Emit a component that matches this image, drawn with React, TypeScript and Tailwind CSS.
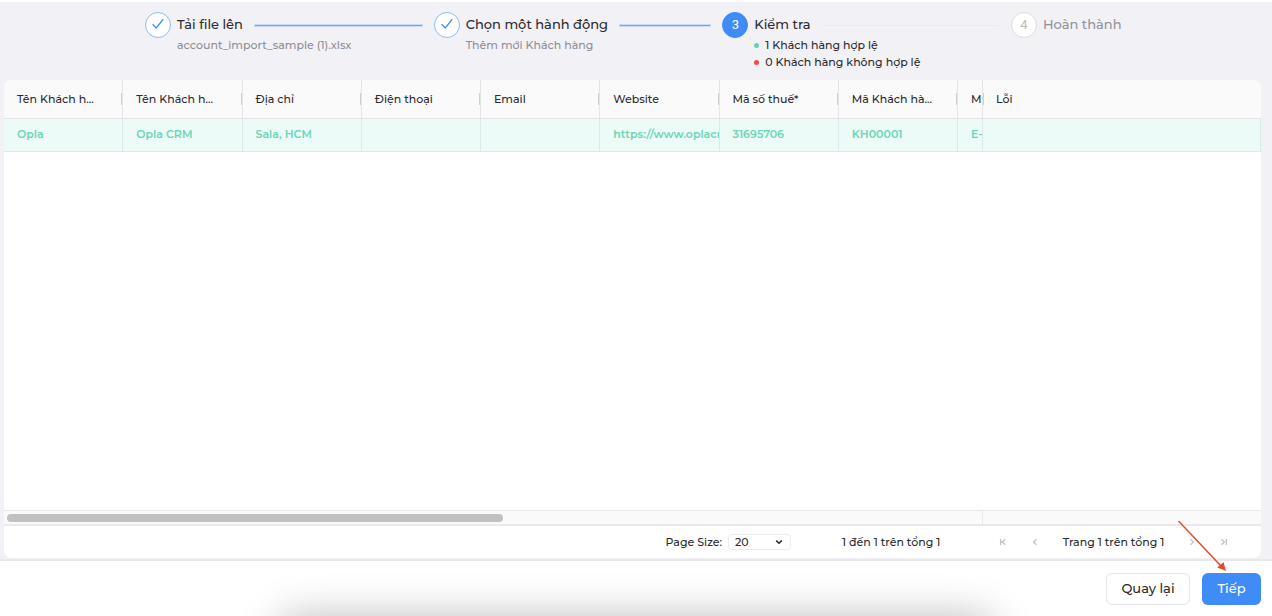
import type { ReactNode } from "react";

type StepState = "done" | "active" | "pending";

type Step = {
  title: string;
  state: StepState;
  detail?: ReactNode;
};

const steps: Step[] = [
  { title: "Tải file lên", state: "done", detail: "account_import_sample (1).xlsx" },
  { title: "Chọn một hành động", state: "done", detail: "Thêm mới Khách hàng" },
  {
    title: "Kiểm tra",
    state: "active",
    detail: (
      <ul className="text-[#2b2b30]">
        <li className="flex items-center gap-1.5">
          <span className="size-[5px] shrink-0 rounded-full bg-[#63d2ae]" />1 Khách hàng hợp lệ
        </li>
        <li className="flex items-center gap-1.5">
          <span className="size-[5px] shrink-0 rounded-full bg-[#f04a4a]" />0 Khách hàng không hợp lệ
        </li>
      </ul>
    ),
  },
  { title: "Hoàn thành", state: "pending" },
];

const columns = [
  { label: "Tên Khách h...", value: "Opla" },
  { label: "Tên Khách h...", value: "Opla CRM" },
  { label: "Địa chỉ", value: "Sala, HCM" },
  { label: "Điện thoại", value: "" },
  { label: "Email", value: "" },
  { label: "Website", value: "https://www.oplacr" },
  { label: "Mã số thuế*", value: "31695706" },
  { label: "Mã Khách hà...", value: "KH00001" },
  { label: "M", value: "E-" },
];

const circleStyles: Record<StepState, string> = {
  done: "border-[#8dbcfa] bg-white text-[#3f8cf8]",
  active: "border-[#3f8cf8] bg-[#3f8cf8] text-white",
  pending: "border-[#dcdce0] bg-white text-[#b9b9be]",
};

function StepItem({ step, index }: { step: Step; index: number }) {
  const last = index === steps.length - 1;
  return (
    <li className="flex min-w-0 gap-1.5">
      <span
        className={`flex size-[26px] shrink-0 items-center justify-center rounded-full border pb-0.5 font-['Roboto',sans-serif] text-[13px] leading-none ${circleStyles[step.state]}`}
      >
        {step.state === "done" ? (
          <svg viewBox="0 0 14 14" className="size-3.5" fill="none" stroke="currentColor" strokeWidth="1.3">
            <path d="M1.6 7.2 5.3 11 12.3 2.2" />
          </svg>
        ) : (
          index + 1
        )}
      </span>
      <div className="min-w-0 flex-1">
        <div className="flex h-[26px] items-center gap-3 pr-3">
          <span
            className={`text-[13px] font-medium whitespace-nowrap ${step.state === "pending" ? "text-[#939399]" : "text-[#2b2b30]"}`}
          >
            {step.title}
          </span>
          {!last && (
            <span
              className={`h-px flex-1 ${step.state === "done" ? "bg-[#6ba7f9] outline outline-[#6ba7f9]/30" : "bg-[#ebebed]"}`}
            />
          )}
        </div>
        <div className="-mt-px text-[11px] leading-[17px] font-medium whitespace-nowrap text-[#8f8f95]">{step.detail}</div>
      </div>
    </li>
  );
}

function PageButton({ label, path }: { label: string; path: string }) {
  return (
    <button type="button" aria-label={label} disabled className="flex size-4 items-center justify-center text-[#c2c2c6]">
      <svg viewBox="0 0 8 8" className="size-2" fill="none" stroke="currentColor" strokeWidth="1.3">
        <path d={path} />
      </svg>
    </button>
  );
}

export default function App() {
  return (
    <div className="relative flex min-h-screen flex-col overflow-hidden bg-white pt-0.5 font-['Montserrat','Inter',sans-serif] text-[#2b2b30]">
      <main className="flex flex-1 flex-col bg-[#f2f1f6] pr-[11px] pb-px pl-1">
        <ol className="grid h-[78px] grid-cols-[1fr_1fr_1fr_109px] pt-2.5 pr-[141px] pl-[141px]">
          {steps.map((step, i) => (
            <StepItem key={step.title} step={step} index={i} />
          ))}
        </ol>

        <section className="flex flex-1 flex-col overflow-hidden rounded-lg bg-white text-[11px] font-medium">
          <table className="w-full table-fixed border-separate border-spacing-0 text-left">
            <colgroup>
              {columns.map((c, i) => (
                <col key={i} className={i === columns.length - 1 ? "w-[25px]" : ""} />
              ))}
              <col className="w-[278px]" />
            </colgroup>
            <thead className="bg-[#fafafa]">
              <tr className="h-[39px]">
                {columns.map((c, i) => (
                  <th key={i} className="border-r border-b border-[#e3e5e5] p-0 font-medium">
                    <div
                      className={`flex h-3 items-center ${i === columns.length - 1 ? "" : "border-r border-[#cfcfcf]"}`}
                    >
                      <span className="pl-[13px] whitespace-nowrap">{c.label}</span>
                    </div>
                  </th>
                ))}
                <th className="border-b border-[#e3e5e5] p-0 font-medium">
                  <div className="flex h-3 items-center border-l border-[#cfcfcf] pl-3">Lỗi</div>
                </th>
              </tr>
            </thead>
            <tbody>
              <tr className="h-[33px] bg-[#ecfbf8] font-semibold text-[#6bd6b6]">
                {columns.map((c, i) => (
                  <td key={i} className="overflow-hidden border-r border-b border-[#d9ebe8] pt-0 pr-0 pb-0.5 pl-[13px] whitespace-nowrap">
                    {c.value}
                  </td>
                ))}
                <td className="border-r border-b border-[#d9ebe8]" />
              </tr>
            </tbody>
          </table>

          <div className="flex-1" />

          <div className="flex h-4 border-t border-b-2 border-[#e9e9eb] bg-[#fafafa]">
            <div className="flex flex-1 items-center border-r border-[#e9e9eb] px-[3px]">
              <div className="h-2 w-[51%] rounded-full bg-[#c1c1c1]" />
            </div>
            <div className="w-[278px]" />
          </div>

          <div className="flex h-8 items-center justify-end pr-[29px]">
            <label htmlFor="page-size" className="mr-1.5 whitespace-nowrap">
              Page Size:
            </label>
            <div className="relative mr-[51px]">
              <select
                id="page-size"
                defaultValue="20"
                className="block h-4 w-[63px] appearance-none rounded-sm border border-[#ececee] bg-white pl-1.5 leading-3"
              >
                <option>20</option>
                <option>50</option>
                <option>100</option>
              </select>
              <svg
                viewBox="0 0 8 8"
                className="pointer-events-none absolute top-1 right-2 size-2"
                fill="none"
                stroke="currentColor"
                strokeWidth="1.5"
              >
                <path d="M1.2 2.6 4 5.2 6.8 2.6" />
              </svg>
            </div>
            <span className="w-[103px] whitespace-nowrap">1 đến 1 trên tổng 1</span>
            <div className="ml-[50px] flex items-center gap-4">
              <PageButton label="Trang đầu" path="M1.6 1v6M6.2 1.2 3.4 4l2.800 2.800M2 4h1.400" />
              <PageButton label="Trang trước" path="M5.4 1.2 2.6 4l2.8 2.8" />
            </div>
            <span className="w-[141px] text-center whitespace-nowrap">Trang 1 trên tổng 1</span>
            <div className="flex items-center gap-4">
              <PageButton label="Trang sau" path="M2.6 1.2 5.4 4 2.6 6.8" />
              <PageButton label="Trang cuối" path="M6.4 1v6M1.6 1.2 4.4 4 1.6 6.8" />
            </div>
          </div>
        </section>
      </main>

      <footer className="relative flex items-start justify-end gap-3 overflow-hidden border-t-2 border-[#e7e7ee] pt-3 pr-[11px] pb-[11px] text-[13px] font-medium">
        <div className="absolute inset-x-[22%] top-full h-10 rounded-xl shadow-[0_0_40px_rgba(0,0,0,0.26)]" />
        <button type="button" className="h-8 w-[84px] rounded-md border border-[#e6e6e8] bg-white">
          Quay lại
        </button>
        <button type="button" className="h-8 w-[59px] rounded-md bg-[#3f8cf8] text-white">
          Tiếp
        </button>
      </footer>

      <svg viewBox="0 0 50 54" className="pointer-events-none absolute right-[45px] bottom-11 h-[54px] w-[50px]" aria-hidden="true">
        <path d="M2 3.500 43.500 47.500" stroke="#ea4a2c" strokeWidth="1.5" strokeLinecap="round" />
        <path d="M49 53 40.200 49.500 46.500 44Z" fill="#ea4a2c" />
      </svg>
    </div>
  );
}
